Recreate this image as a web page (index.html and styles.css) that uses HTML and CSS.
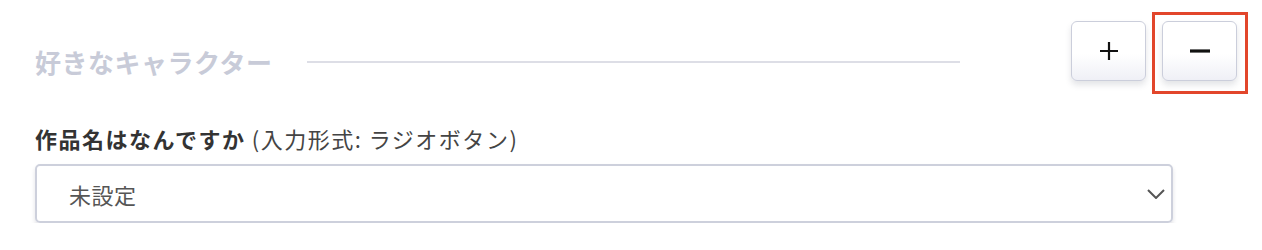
FILE: index.html
```html
<!DOCTYPE html>
<html lang="ja">
<head>
<meta charset="utf-8">
<link rel="stylesheet" href="styles.css">
</head>
<body>
<div class="section">
  <div class="header">
    <div class="title-block">
      <h2 class="title">好きなキャラクター</h2>
      <div class="rule"></div>
    </div>
    <div class="actions">
      <button class="btn" type="button" aria-label="追加">
        <svg width="18" height="18" viewBox="0 0 18 18"><path d="M9 0V18M0 9H18" stroke="#111" stroke-width="2.2" fill="none"/></svg>
      </button>
      <div class="highlight-wrap">
        <button class="btn" type="button" aria-label="削除">
          <svg width="20" height="4" viewBox="0 0 20 4"><path d="M0 2H20" stroke="#111" stroke-width="3.2" fill="none"/></svg>
        </button>
        <span class="highlight"></span>
      </div>
    </div>
  </div>
  <div class="label"><strong>作品名はなんですか</strong> (入力形式: ラジオボタン)</div>
  <div class="select">
    <span class="select-value">未設定</span>
    <svg class="chevron" width="18" height="10" viewBox="0 0 18 10"><path d="M1 1L9 9L17 1" stroke="#555" stroke-width="2" fill="none"/></svg>
  </div>
</div>
</body>
</html>
```

FILE: styles.css
```css
* { box-sizing: border-box; }
html, body { margin: 0; padding: 0; background: #fff; }
body {
  font-family: "Noto Sans CJK JP", "Noto Sans", sans-serif;
  color: #333;
}
.section {
  padding: 21px 25px 0 35px;
}
.header {
  display: flex;
  align-items: flex-start;
  height: 60px;
}
.title-block {
  flex: 1;
  display: flex;
  align-items: center;
  margin-top: 26px;
  margin-right: 111px;
  height: 30px;
}
.title {
  margin: 0;
  font-size: 26px;
  line-height: 30px;
  font-weight: 700;
  letter-spacing: 0.5px;
  color: #c8cbd8;
  white-space: nowrap;
}
.rule {
  flex: 1;
  height: 2px;
  background: #dddee6;
  margin-left: 35px;
}
.actions {
  display: flex;
  gap: 16px;
}
.btn {
  width: 75px;
  height: 60px;
  border: 1.5px solid #cbcedb;
  border-radius: 6px;
  background: linear-gradient(#ffffff 55%, #eff0f6);
  box-shadow: 0 4px 6px rgba(40, 45, 70, 0.13);
  display: flex;
  align-items: center;
  justify-content: center;
  padding: 0;
  cursor: pointer;
}
.highlight-wrap {
  position: relative;
}
.highlight {
  position: absolute;
  left: -10px;
  top: -9px;
  right: -11px;
  bottom: -13px;
  border: 3px solid #e2462b;
  pointer-events: none;
}
.label {
  margin-top: 42px;
  font-size: 22px;
  line-height: 30px;
  letter-spacing: 1.5px;
  color: #444;
}
.label strong {
  color: #333;
  font-weight: 700;
}
.select {
  margin-top: 11px;
  width: 1138px;
  height: 59px;
  border: 2px solid #cdd0dc;
  border-radius: 5px;
  box-shadow: 0 3px 4px rgba(40, 45, 70, 0.14);
  display: flex;
  align-items: center;
  justify-content: space-between;
  padding: 0 6px 0 32px;
}
.select-value {
  font-size: 22px;
  letter-spacing: 0.5px;
  color: #555;
}
.chevron {
  display: block;
}
```
